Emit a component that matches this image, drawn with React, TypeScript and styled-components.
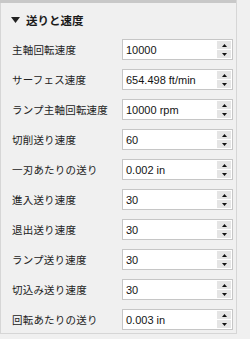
import React from 'react';
import styled, { createGlobalStyle } from 'styled-components';

const GlobalStyle = createGlobalStyle`
  html, body {
    margin: 0;
    padding: 0;
    background: #f0f0f0;
  }
  body {
    font-family: "Liberation Sans", "Noto Sans CJK JP", sans-serif;
    font-size: 12px;
    color: #1e1e1e;
  }
`;

const rows = [
    {label: '主軸回転速度', value: '10000'},
    {label: 'サーフェス速度', value: '654.498 ft/min'},
    {label: 'ランプ主軸回転速度', value: '10000 rpm'},
    {label: '切削送り速度', value: '60'},
    {label: '一刃あたりの送り', value: '0.002 in'},
    {label: '進入送り速度', value: '30'},
    {label: '退出送り速度', value: '30'},
    {label: 'ランプ送り速度', value: '30'},
    {label: '切込み送り速度', value: '30'},
    {label: '回転あたりの送り', value: '0.003 in'},
];

const Spinner = () => (
    <SpinBox>
        <SpinButton>
            <svg width="5" height="3" viewBox="0 0 5 3"><path d="M2.5 0 L5 3 L0 3 Z" fill="#111"/></svg>
        </SpinButton>
        <SpinButton>
            <svg width="5" height="3" viewBox="0 0 5 3"><path d="M0 0 L5 0 L2.5 3 Z" fill="#111"/></svg>
        </SpinButton>
    </SpinBox>
);

const App = () => {
    return (
        <Page>
            <GlobalStyle/>
            <Panel>
                <TopBar/>
                <Header>
                    <svg width="9" height="6" viewBox="0 0 9 6"><path d="M0 0 L9 0 L4.5 6 Z" fill="#222"/></svg>
                    <HeaderTitle>送りと速度</HeaderTitle>
                </Header>
                <List>
                    {rows.map(r => (
                        <Row key={r.label}>
                            <Label>{r.label}</Label>
                            <Field>
                                <Value>{r.value}</Value>
                                <Spinner/>
                            </Field>
                        </Row>
                    ))}
                </List>
            </Panel>
        </Page>
    );
};

const Page = styled.div`
  width: 250px;
  height: 339px;
  overflow: hidden;
  background: #f0f0f0;
`

const Panel = styled.section`
  width: 237px;
  height: 334px;
  border-left: 1px solid #d6d6d6;
  border-right: 1px solid #d6d6d6;
  border-bottom: 1px solid #d6d6d6;
  box-sizing: border-box;
  background: #f0f0f0;
`

const TopBar = styled.div`
  height: 3px;
  margin-left: -1px;
  background: #c8c8c8;
`

const Header = styled.div`
  display: flex;
  align-items: center;
  gap: 6px;
  height: 33px;
  padding-left: 10px;
`

const HeaderTitle = styled.span`
  font-family: "Noto Sans CJK JP", sans-serif;
  font-weight: 700;
  font-size: 11.5px;
  color: #1a1a1a;
`

const List = styled.div`
  display: flex;
  flex-direction: column;
  gap: 9px;
  padding-top: 3px;
`

const Row = styled.div`
  display: flex;
  align-items: center;
  height: 21px;
  padding-left: 11px;
`

const Label = styled.span`
  width: 110px;
  font-family: "Noto Sans CJK JP", sans-serif;
  font-size: 10.5px;
  letter-spacing: 0.2px;
  color: #222;
`

const Field = styled.div`
  display: flex;
  align-items: stretch;
  width: 111px;
  height: 21px;
  box-sizing: border-box;
  border: 1px solid #c6c6c6;
  background: #fff;
`

const Value = styled.span`
  flex: 1;
  display: flex;
  align-items: center;
  padding-left: 3px;
  font-family: "Liberation Sans", sans-serif;
  font-size: 11px;
  color: #141414;
`

const SpinBox = styled.div`
  display: flex;
  flex-direction: column;
  gap: 1px;
  width: 14px;
  padding: 1px;
  background: #fff;
`

const SpinButton = styled.div`
  flex: 1;
  display: flex;
  align-items: center;
  justify-content: center;
  background: #e5e5e5;
`

export default App;
